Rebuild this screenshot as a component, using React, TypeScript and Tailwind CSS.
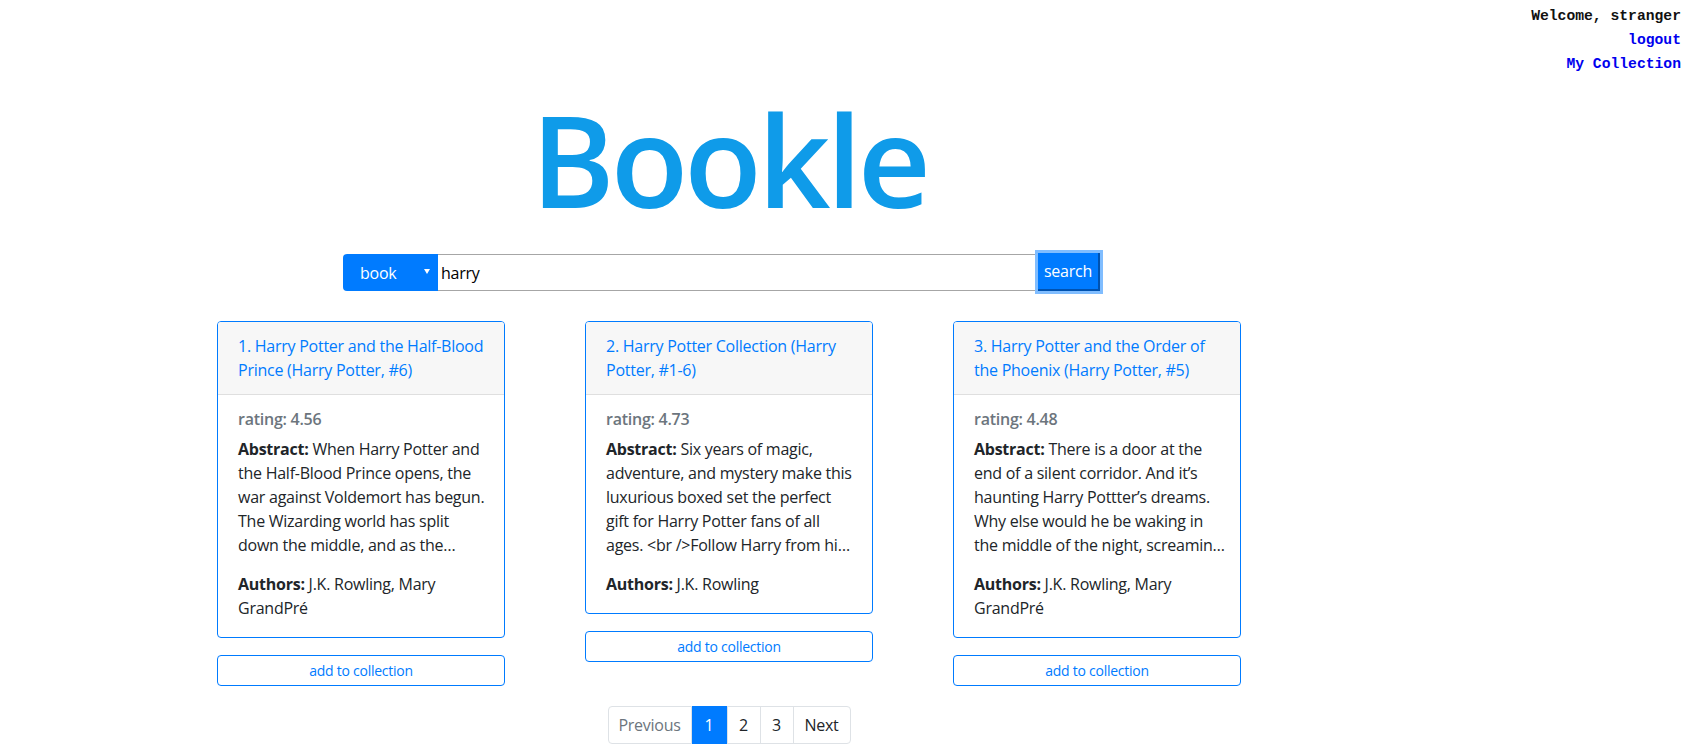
import React from 'react';

type Book = {
  id: number;
  title: string[];
  rating: string;
  abstract: string[];
  authors: string[];
};

const BOOKS: Book[] = [
  {
    id: 1,
    title: ['1. Harry Potter and the Half-Blood', 'Prince (Harry Potter, #6)'],
    rating: '4.56',
    abstract: [
      'When Harry Potter and',
      'the Half-Blood Prince opens, the',
      'war against Voldemort has begun.',
      'The Wizarding world has split',
      'down the middle, and as the…',
    ],
    authors: ['J.K. Rowling, Mary', 'GrandPré'],
  },
  {
    id: 2,
    title: ['2. Harry Potter Collection (Harry', 'Potter, #1-6)'],
    rating: '4.73',
    abstract: [
      'Six years of magic,',
      'adventure, and mystery make this',
      'luxurious boxed set the perfect',
      'gift for Harry Potter fans of all',
      'ages. <br />Follow Harry from hi…',
    ],
    authors: ['J.K. Rowling'],
  },
  {
    id: 3,
    title: ['3. Harry Potter and the Order of', 'the Phoenix (Harry Potter, #5)'],
    rating: '4.48',
    abstract: [
      'There is a door at the',
      'end of a silent corridor. And it’s',
      'haunting Harry Pottter’s dreams.',
      'Why else would he be waking in',
      'the middle of the night, screamin…',
    ],
    authors: ['J.K. Rowling, Mary', 'GrandPré'],
  },
];

function BookCard({ book }: { book: Book }) {
  return (
    <div className="flex flex-col">
      <div className="rounded-[4px] border border-[#007bff] bg-white overflow-hidden">
        {/* card header */}
        <div className="bg-[#f7f7f7] border-b border-[#dfdfdf] px-[20px] py-[12px] text-[16px] leading-[24px] text-[#007bff]">
          {book.title.map((t, i) => (
            <div key={i} className="whitespace-nowrap">{t}</div>
          ))}
        </div>

        {/* card body */}
        <div className="px-[20px] pt-[20px] pb-[17px] text-[16px] text-[#212529]">
          <div className="-mt-[5px] mb-[8px] leading-[19.2px] font-semibold text-[#6c757d]">
            rating: {book.rating}
          </div>
          <div className="mb-[15px] leading-[24px]">
            {book.abstract.map((line, i) => (
              <div key={i} className="whitespace-nowrap">
                {i === 0 && <b className="font-bold">Abstract: </b>}
                {line}
              </div>
            ))}
          </div>
          <div className="leading-[24px]">
            {book.authors.map((line, i) => (
              <div key={i} className="whitespace-nowrap">
                {i === 0 && <b className="font-bold">Authors: </b>}
                {line}
              </div>
            ))}
          </div>
        </div>
      </div>

      <button className="mt-[17px] h-[31px] w-full rounded-[4px] border border-[#007bff] bg-white text-[14px] leading-[21px] text-[#007bff]">
        add to collection
      </button>
    </div>
  );
}

export default function App() {
  return (
    <div
      className="min-h-[755px] bg-white text-[#212529] tracking-[-0.25px]"
      style={{ fontFamily: '"Open Sans", "Noto Sans", sans-serif' }}
    >
      {/* user box */}
      <div
        className="flex flex-col items-end pr-[6px] pt-[4px] text-[14.7px] leading-[24px] font-bold tracking-normal"
        style={{ fontFamily: '"Liberation Mono", "DejaVu Sans Mono", monospace' }}
      >
        <span className="text-[#111]">Welcome, stranger</span>
        <a className="text-[#0000ee]">logout</a>
        <a className="text-[#0000ee]">My Collection</a>
      </div>

      <div className="ml-[217px] w-[1024px]">
        {/* logo */}
        <h1 className="mt-[19px] text-center text-[127px] leading-[127px] font-semibold tracking-[-4px] text-[#0f9be9]">
          Bookle
        </h1>

        {/* search bar */}
        <div className="mt-[31px] ml-[126px] flex items-end">
          <div className="relative flex h-[37px] w-[95px] items-center rounded-l-[4px] bg-[#007bff] pl-[17px] text-[16px] text-white">
            book
            <svg className="absolute right-[8px] top-[15px]" width="6" height="5" viewBox="0 0 6 5">
              <path d="M0 0h6L3 5z" fill="#fff" />
            </svg>
          </div>
          <div className="flex h-[37px] w-[600px] items-center border-y border-[#a6a6a6] pl-[3px] text-[16px] text-black">
            harry
          </div>
          <button className="h-[38px] w-[62px] border-r-2 border-b-2 border-[#0052b0] bg-[#007bff] text-[16px] text-white ring-[3px] ring-[#80bdff]">
            search
          </button>
        </div>

        {/* results */}
        <div className="mt-[30px] grid grid-cols-3 items-start gap-[80px]">
          {BOOKS.map((b) => (
            <BookCard key={b.id} book={b} />
          ))}
        </div>

        {/* pagination */}
        <div className="mt-[20px] flex justify-center">
          <div className="flex h-[38px] text-[16px] leading-[20px]">
            <span className="flex w-[84px] items-center justify-center rounded-l-[4px] border border-[#dee2e6] text-[#6c757d]">
              Previous
            </span>
            <span className="flex w-[35px] items-center justify-center bg-[#007bff] text-white">1</span>
            <span className="flex w-[34px] items-center justify-center border border-[#dee2e6] text-[#212529]">2</span>
            <span className="-ml-px flex w-[34px] items-center justify-center border border-[#dee2e6] text-[#212529]">3</span>
            <span className="-ml-px flex w-[58px] items-center justify-center rounded-r-[4px] border border-[#dee2e6] text-[#212529]">
              Next
            </span>
          </div>
        </div>
      </div>
    </div>
  );
}
